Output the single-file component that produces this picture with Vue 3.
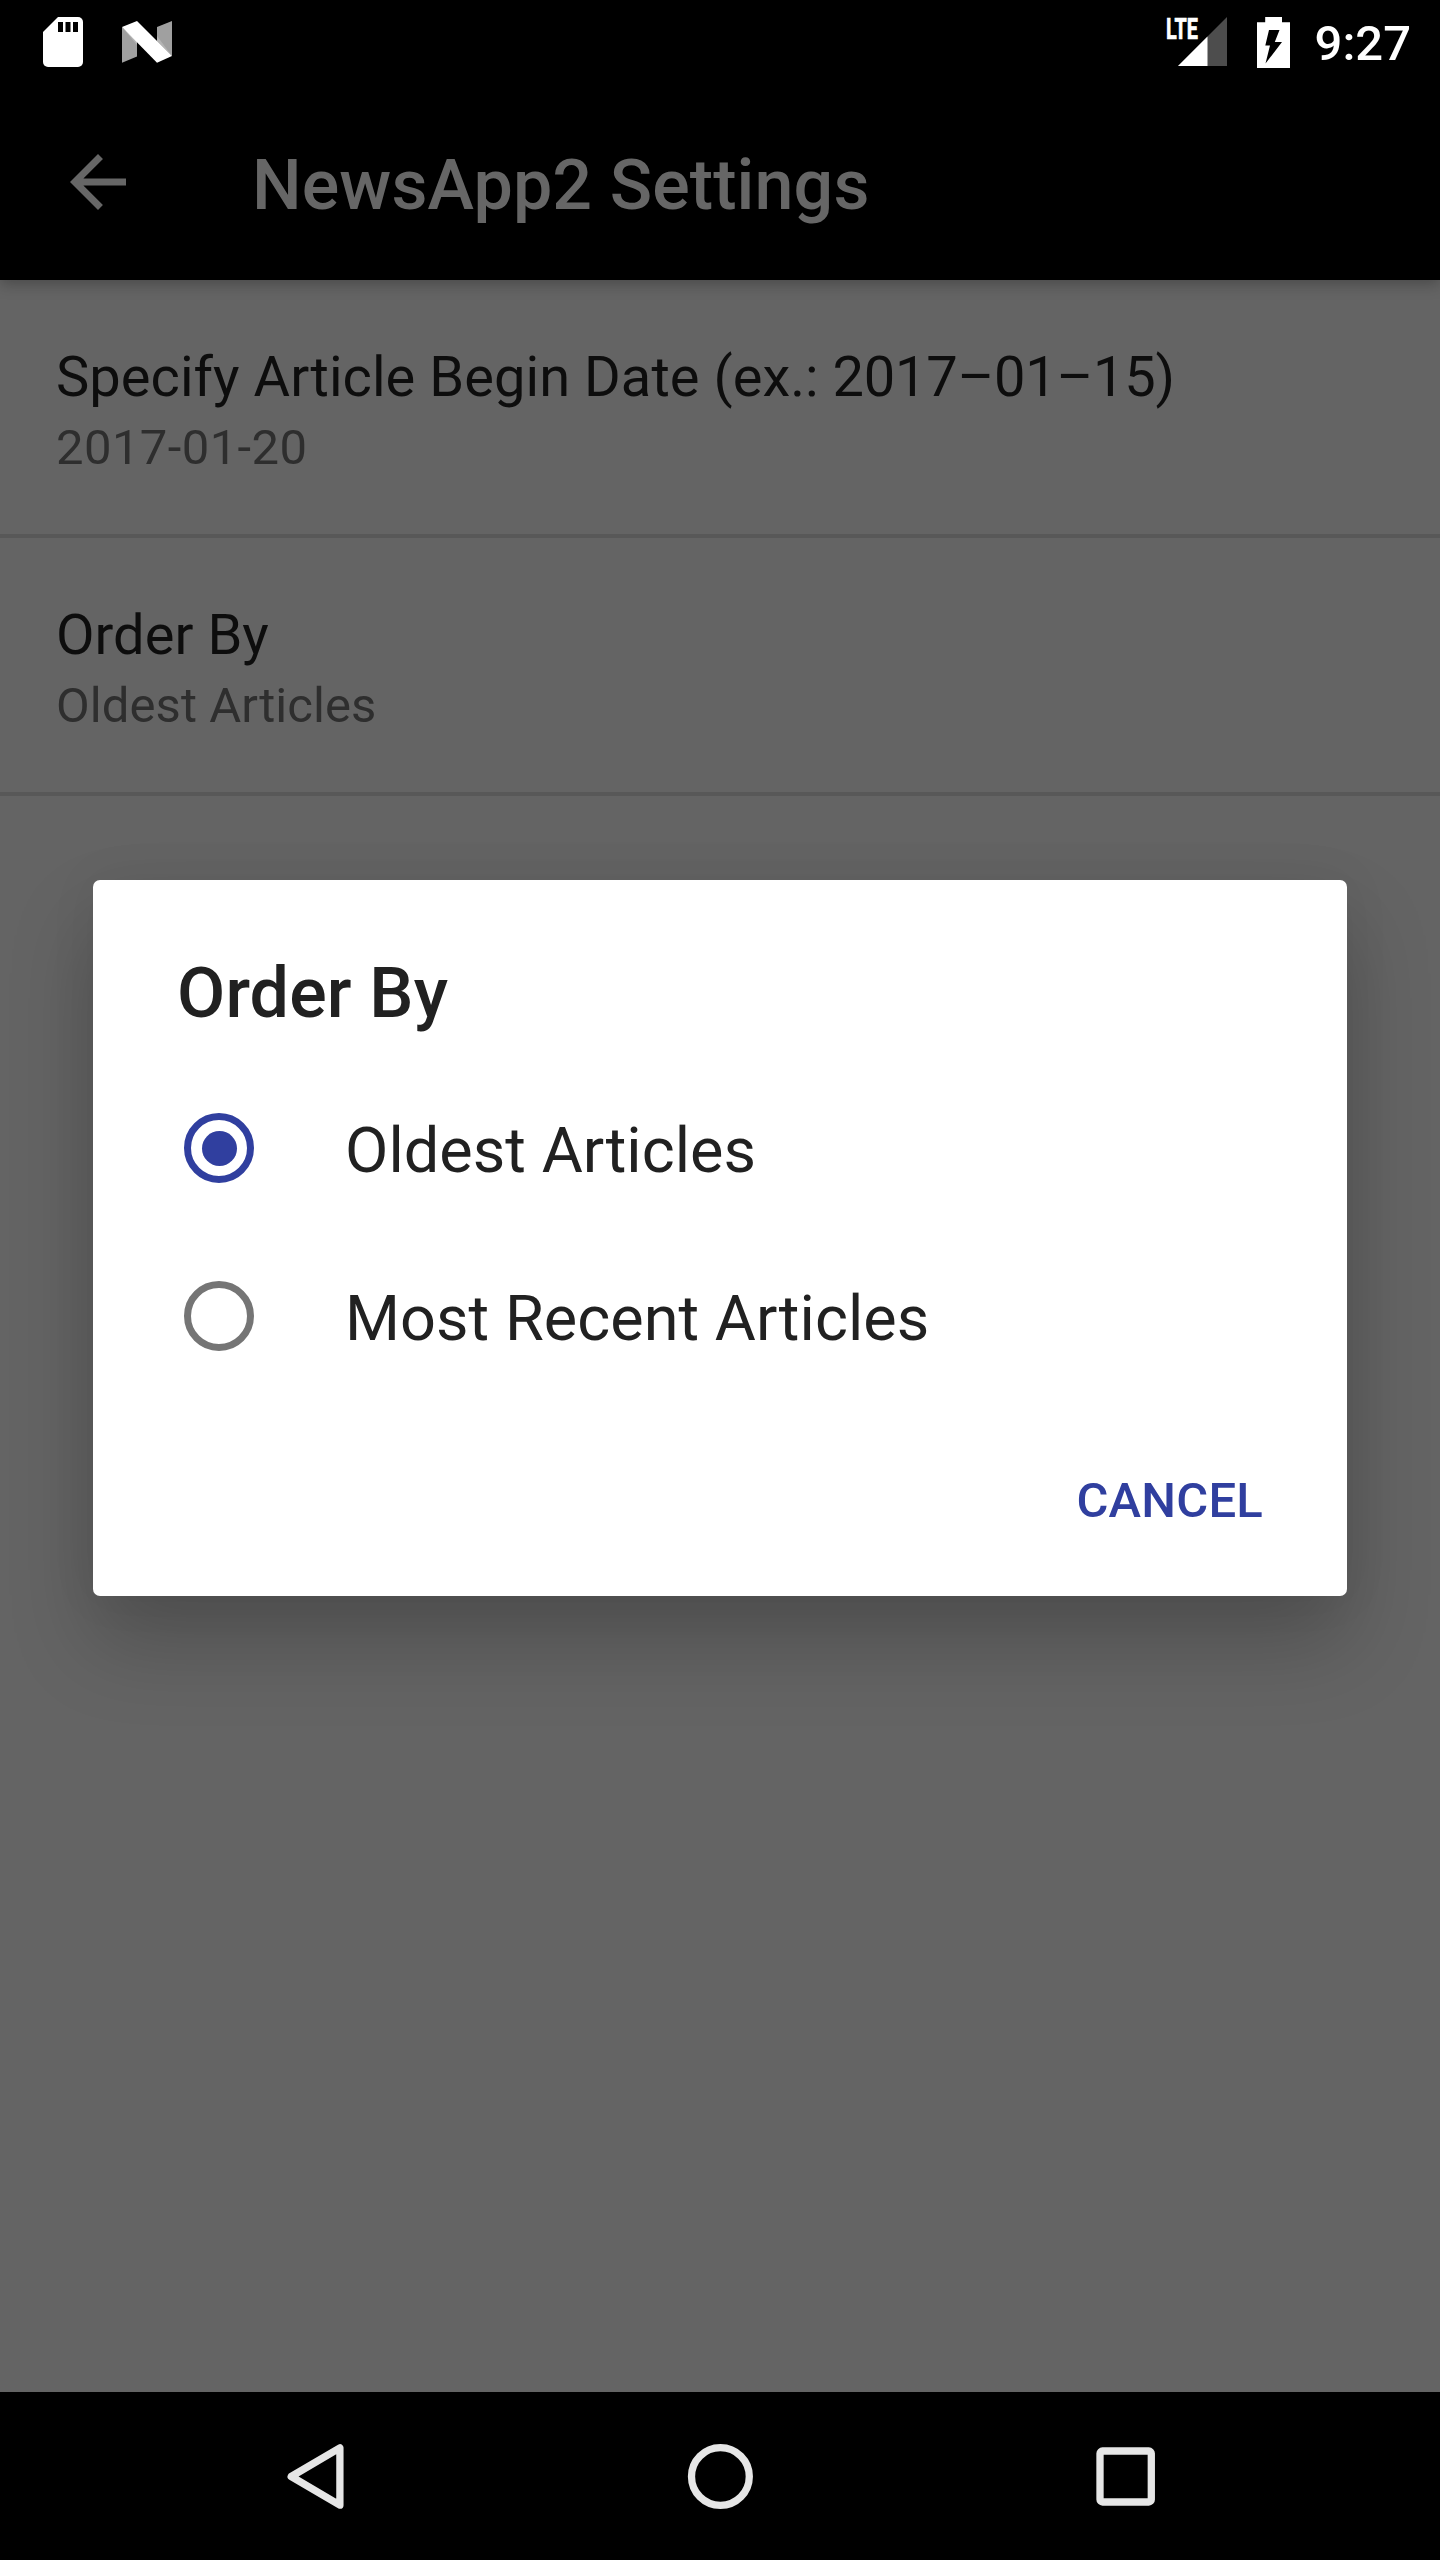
<script setup>
import { ref } from 'vue'

const preferences = [
  { title: 'Specify Article Begin Date (ex.: ', hint: '2017–01–15)', summary: '2017-01-20', numeric: true },
  { title: 'Order By', summary: 'Oldest Articles' },
]
const options = ['Oldest Articles', 'Most Recent Articles']
const selected = ref('Oldest Articles')
</script>

<template>
  <div class="screen">
    <header class="status-bar">
      <div class="status-icons">
        <svg class="sd" width="40" height="50" viewBox="0 0 40 50">
          <path fill="#fff" d="M15 0H35a5 5 0 0 1 5 5V45a5 5 0 0 1-5 5H5a5 5 0 0 1-5-5V15Z" />
          <path fill="#000" d="M15 5h5v10h-5zM22.500 5h5v10h-5zM30 5h5v10h-5z" />
        </svg>
        <svg width="50" height="42" viewBox="0 0 50 42">
          <path fill="#a0a0a0" d="M0 6 15 21V35.500L0 41.700ZM50 0 35 6V20L50 35Z" />
          <path fill="#b4b4b4" d="M0 6 15 24V20ZM35 15V20L50 35Z" />
          <path fill="#fff" d="M0 6 15 0 50 35 35 41.700Z" />
        </svg>
      </div>
      <div class="status-icons">
        <svg class="signal" width="62" height="68" viewBox="0 0 62 68">
          <text class="lte" x="0" y="31" textLength="32" lengthAdjust="spacingAndGlyphs">LTE</text>
          <path fill="#4d4d4d" d="M61 9V58H12Z" />
          <path fill="#fff" d="M41.500 28.500V58H12Z" />
        </svg>
        <svg class="battery" width="33" height="51" viewBox="0 0 33 51">
          <path fill="#fff" d="M8.200 0H25V5.200H33V51H0V5.200H8.200Z" />
          <path fill="#000" d="M12 13H22.500L17.800 25H25L8.500 46.500 13 28.500H8.300Z" />
        </svg>
        <span class="clock">9:27</span>
      </div>
    </header>

    <div class="app-bar">
      <svg width="84" height="84" viewBox="0 0 24 24">
        <path fill="#666" d="M20 11H7.830l5.590-5.590L12 4l-8 8 8 8 1.410-1.410L7.830 13H20v-2z" />
      </svg>
      <h1>NewsApp2 Settings</h1>
    </div>

    <main class="preferences">
      <section v-for="item in preferences" :key="item.title" class="preference">
        <div class="pref-title">{{ item.title }}<span v-if="item.hint" class="hint">{{ item.hint }}</span></div>
        <div class="pref-summary" :class="{ numeric: item.numeric }">{{ item.summary }}</div>
      </section>
    </main>

    <nav class="nav-bar">
      <svg width="1440" height="168" viewBox="0 0 1440 168" fill="none" stroke="#e6e6e6" stroke-width="7.300">
        <path stroke-linejoin="round" d="M291.200 84.500 339.900 55.800V113.200Z" />
        <circle cx="720.400" cy="84.500" r="28.900" />
        <rect x="1100" y="59" width="51.300" height="51" rx="2.500" />
      </svg>
    </nav>

    <div class="overlay">
      <div class="dialog" role="dialog">
        <h2>Order By</h2>
        <div v-for="option in options" :key="option" class="option" @click="selected = option">
          <span class="radio" :class="{ checked: selected === option }"></span>
          <span class="option-label">{{ option }}</span>
        </div>
        <div class="actions">CANCEL</div>
      </div>
    </div>
  </div>
</template>

<style>
body {
  margin: 0;
  background: #646464;
}
</style>

<style scoped>
.screen {
  position: relative;
  display: flex;
  flex-direction: column;
  width: 1440px;
  height: 2560px;
  overflow: hidden;
  background: #646464;
  font-family: Roboto, sans-serif;
}
svg {
  display: block;
  flex: none;
}
.status-bar {
  display: flex;
  justify-content: space-between;
  flex: none;
  box-sizing: border-box;
  height: 84px;
  padding: 0 29px 0 43px;
  background: #000;
}
.status-icons {
  display: flex;
  align-items: center;
}
.sd {
  margin-right: 39px;
}
.signal {
  overflow: visible;
  margin-right: 29px;
}
.battery {
  margin-right: 25px;
}
.lte {
  fill: #fff;
  stroke: #fff;
  stroke-width: 0.7px;
  font-size: 30px;
  font-weight: 700;
}
.clock {
  padding-top: 4px;
  color: #fff;
  font-size: 49px;
  font-weight: 500;
  line-height: 80px;
}
.app-bar {
  position: relative;
  display: flex;
  align-items: center;
  flex: none;
  gap: 112px;
  height: 196px;
  padding-left: 56px;
  background: #000;
  box-shadow: 0 4px 14px rgba(0, 0, 0, 0.27);
}
h1 {
  margin: 0;
  padding-top: 5px;
  color: #666;
  font-size: 70px;
  font-weight: 500;
  line-height: 82px;
  letter-spacing: 0.1px;
}
.preferences {
  flex: 1;
}
.preference {
  box-sizing: border-box;
  height: 258px;
  padding: 60px 56px 0;
  border-bottom: 4px solid #585858;
}
.pref-title {
  color: #0d0d0d;
  font-size: 56px;
  line-height: 74px;
  letter-spacing: 0.05px;
}
.hint {
  letter-spacing: -0.25px;
}
.pref-summary {
  padding-top: 1px;
  color: #2e2e2e;
  font-size: 49px;
  line-height: 65px;
  letter-spacing: 0.08px;
}
.numeric {
  letter-spacing: 0.4px;
}
.nav-bar {
  flex: none;
  height: 168px;
  background: #000;
}
.overlay {
  position: absolute;
  inset: 84px 0 168px;
  display: flex;
  align-items: center;
  justify-content: center;
}
.dialog {
  box-sizing: border-box;
  width: 1254px;
  height: 716px;
  padding: 66px 84px 0;
  border-radius: 7px;
  background: #fff;
  color: #212121;
  box-shadow: 0 46px 84px rgba(0, 0, 0, 0.21), 0 0 50px rgba(0, 0, 0, 0.06);
}
h2 {
  margin: 0 0 24px;
  font-size: 70px;
  font-weight: 500;
  line-height: 94px;
  letter-spacing: 0.15px;
}
.option {
  display: flex;
  align-items: center;
  gap: 91px;
  height: 168px;
  padding-left: 7px;
}
.radio {
  display: flex;
  align-items: center;
  justify-content: center;
  box-sizing: border-box;
  width: 70px;
  height: 70px;
  border: 7px solid #757575;
  border-radius: 50%;
}
.radio.checked {
  border-color: #303f9f;
}
.radio.checked::after {
  content: '';
  width: 35px;
  height: 35px;
  border-radius: 50%;
  background: #303f9f;
}
.option-label {
  padding-top: 5px;
  font-size: 63px;
  line-height: 74px;
  letter-spacing: 0.04px;
}
.actions {
  padding-top: 1px;
  color: #303f9f;
  font-size: 49px;
  font-weight: 500;
  line-height: 200px;
  letter-spacing: 0.2px;
  text-align: right;
}
</style>
